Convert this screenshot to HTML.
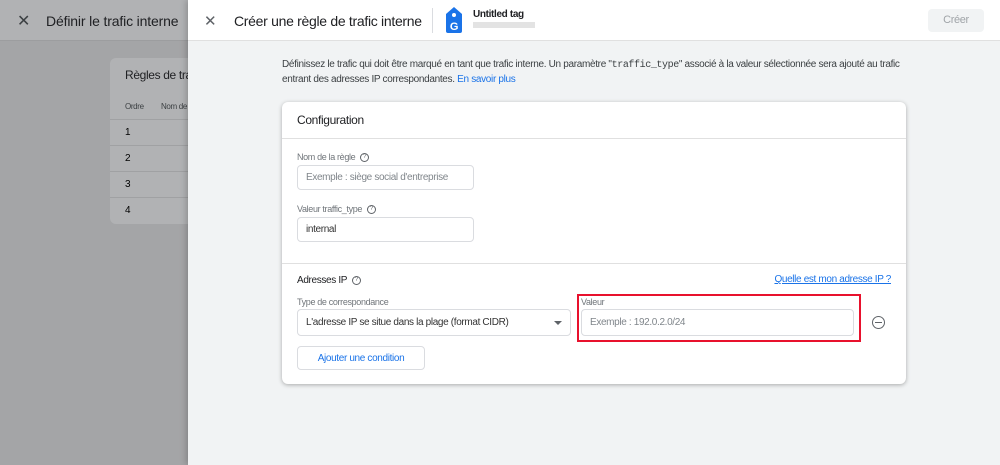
<!DOCTYPE html>
<html><head><meta charset="utf-8"><style>
*{box-sizing:border-box;margin:0;padding:0}
body{width:1000px;height:465px;overflow:hidden;font-family:"Liberation Sans",Arial,sans-serif;background:#a4a5a7;position:relative;letter-spacing:-0.35px}
.abs{position:absolute}
.lh{left:0;top:0;width:188px;height:41px;background:#b1b2b4;border-bottom:1px solid #9c9d9f}
.card{left:110px;top:58px;width:100px;height:166px;background:#b1b2b4;border-radius:6px}
.panel{left:188px;top:0;width:812px;height:465px;background:#f1f3f4;box-shadow:-2px 0 6px rgba(0,0,0,.2)}
.hdr{left:0;top:0;width:812px;height:41px;background:#fff;border-bottom:1px solid #e0e0e0}
.cfg{left:94px;top:102px;width:624px;height:282px;background:#fff;border-radius:6px;box-shadow:0 1px 4px rgba(0,0,0,.3)}
.lbl{font-size:9px;color:#70757a}
.inp{border:1px solid #dadce0;border-radius:4px;background:#fff;font-size:11px;color:#333;padding-left:8px;display:flex;align-items:center}
.q{display:inline-block;width:9px;height:9px;border:1px solid #5f6368;border-radius:50%;font-size:6px;text-align:center;line-height:7px;color:#5f6368;margin-left:5px;vertical-align:middle;letter-spacing:0}
</style></head><body>
<div class="abs lh"><span class="abs" style="left:17px;top:11px;font-size:16px;color:#3c4043">✕</span><span class="abs" style="left:46px;top:13px;font-size:14px;color:#202124;letter-spacing:-0.15px">Définir le trafic interne</span></div>
<div class="abs card">
<div class="abs" style="left:15px;top:10px;font-size:12px;color:#202124">Règles de tra</div>
<div class="abs" style="left:15px;top:44px;font-size:8px;color:#3c4043">Ordre</div><div class="abs" style="left:51px;top:44px;font-size:8px;color:#3c4043">Nom de</div>
<div class="abs" style="left:0;top:61px;width:100%;border-top:1px solid #a0a1a3"></div>
<div class="abs" style="left:15px;top:69px;font-size:10px">1</div><div class="abs" style="left:0;top:87px;width:100%;border-top:1px solid #a0a1a3"></div>
<div class="abs" style="left:15px;top:95px;font-size:10px">2</div><div class="abs" style="left:0;top:113px;width:100%;border-top:1px solid #a0a1a3"></div>
<div class="abs" style="left:15px;top:121px;font-size:10px">3</div><div class="abs" style="left:0;top:139px;width:100%;border-top:1px solid #a0a1a3"></div>
<div class="abs" style="left:15px;top:147px;font-size:10px">4</div>
</div>
<div class="abs panel">
<div class="abs hdr">
<span class="abs" style="left:16px;top:12px;font-size:15px;color:#5f6368">✕</span>
<span class="abs" style="left:46px;top:13px;font-size:14px;color:#202124;letter-spacing:-0.3px">Créer une règle de trafic interne</span>
<div class="abs" style="left:244px;top:8px;height:25px;border-left:1px solid #dadce0"></div>
<svg class="abs" style="left:257px;top:7px" width="18" height="26" viewBox="0 0 18 26"><path d="M9 0L17 7V24Q17 26 15 26H3Q1 26 1 24V7Z" fill="#1a73e8"/><circle cx="9" cy="8" r="2" fill="#fff"/><text x="9" y="23" font-size="11" font-weight="bold" fill="#fff" text-anchor="middle" font-family="Liberation Sans">G</text></svg>
<span class="abs" style="left:285px;top:9px;font-size:10px;font-weight:bold;color:#202124">Untitled tag</span>
<div class="abs" style="left:285px;top:22px;width:62px;height:6px;background:#e3e3e3"></div>
<div class="abs" style="left:740px;top:9px;width:56px;height:23px;background:#f1f3f4;border-radius:4px;font-size:11px;color:#a0a4a8;text-align:center;line-height:23px">Créer</div>
</div>
<div class="abs" style="left:94px;top:58px;width:630px;font-size:10px;line-height:14px;color:#3c4043;letter-spacing:-0.32px">Définissez le trafic qui doit être marqué en tant que trafic interne. Un paramètre "<span style="font-family:'Liberation Mono',monospace;letter-spacing:-0.4px">traffic_type</span>" associé à la valeur sélectionnée sera ajouté au trafic entrant des adresses IP correspondantes. <span style="color:#1a73e8">En savoir plus</span></div>
<div class="abs cfg">
<div class="abs" style="left:15px;top:11px;font-size:12px;color:#202124">Configuration</div>
<div class="abs" style="left:0;top:36px;width:100%;border-top:1px solid #e0e0e0"></div>
<div class="abs lbl" style="left:15px;top:50px">Nom de la règle<span class="q">?</span></div>
<div class="abs inp" style="left:15px;top:63px;width:177px;height:25px;color:#80868b;font-size:10px">Exemple : siège social d'entreprise</div>
<div class="abs lbl" style="left:15px;top:102px">Valeur traffic_type<span class="q">?</span></div>
<div class="abs inp" style="left:15px;top:115px;width:177px;height:25px;font-size:10px">internal</div>
<div class="abs" style="left:0;top:161px;width:100%;border-top:1px solid #e0e0e0"></div>
<div class="abs" style="left:15px;top:173px;font-size:10px;color:#202124">Adresses IP<span class="q">?</span></div>
<div class="abs" style="right:15px;top:172px;font-size:10px;color:#1a73e8;text-decoration:underline">Quelle est mon adresse IP ?</div>
<div class="abs lbl" style="left:15px;top:195px">Type de correspondance</div>
<div class="abs inp" style="left:15px;top:207px;width:274px;height:27px;font-size:10px">L'adresse IP se situe dans la plage (format CIDR)<span class="abs" style="right:8px;top:11px;border:4px solid transparent;border-top:4px solid #5f6368"></span></div>
<div class="abs" style="left:295px;top:192px;width:284px;height:48px;border:2px solid #e8112d"></div>
<div class="abs lbl" style="left:299px;top:195px">Valeur</div>
<div class="abs inp" style="left:299px;top:207px;width:273px;height:27px;color:#80868b;font-size:10px">Exemple : 192.0.2.0/24</div>
<div class="abs" style="left:590px;top:214px;width:13px;height:13px;border:1.3px solid #5f6368;border-radius:50%"><div class="abs" style="left:2px;top:5px;width:7px;border-top:1.3px solid #5f6368"></div></div>
<div class="abs" style="left:15px;top:244px;width:128px;height:24px;border:1px solid #dadce0;border-radius:4px;font-size:10px;color:#1a73e8;text-align:center;line-height:23px">Ajouter une condition</div>
</div>
</div>
</body></html>
